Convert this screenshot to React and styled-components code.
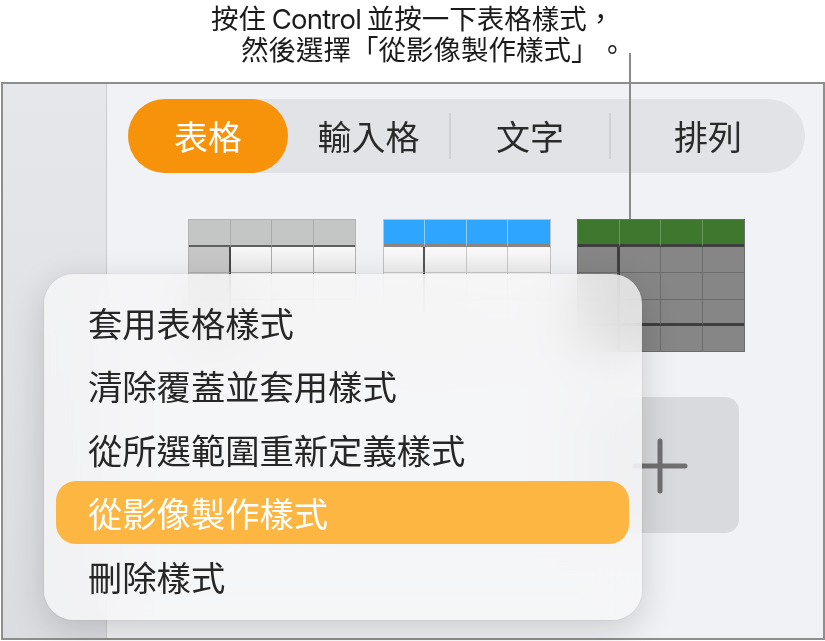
import React from "react";
import styled, { createGlobalStyle } from "styled-components";

const GlobalStyle = createGlobalStyle`
  html, body {
    margin: 0;
    padding: 0;
    background: #ffffff;
  }
  body {
    width: 825px;
    height: 641px;
    overflow: hidden;
    font-family: "Noto Sans CJK TC", sans-serif;
    text-spacing-trim: space-all;
  }
`;

const Page = styled.div`
  position: relative;
  width: 825px;
  height: 641px;
  display: flex;
  flex-direction: column;
`;

const Caption = styled.div`
  height: 82px;
  box-sizing: border-box;
  padding: 4px 0 0 211px;
  font-family: Inter, "Noto Sans CJK TC", sans-serif;
  font-size: 27.5px;
  line-height: 31px;
  color: #1b1b1b;
  text-spacing-trim: space-all;
`;

const CaptionLine = styled.div`
  padding-left: ${(p) => p.$indent || 0}px;
  white-space: nowrap;
  word-spacing: -2px;
`;

const LatinRun = styled.span`
  letter-spacing: -0.8px;
`;

const Leader = styled.div`
  position: absolute;
  left: 629px;
  top: 53px;
  width: 2px;
  height: 166px;
  background: #8a8a8a;
`;

const Window = styled.div`
  display: flex;
  margin-left: 1px;
  width: 824px;
  height: 558px;
  box-sizing: border-box;
  border: 2px solid #8e8e8e;
  overflow: hidden;
`;

const Sidebar = styled.div`
  width: 103px;
  flex: none;
  border-right: 1px solid #cbcccf;
  background: linear-gradient(180deg, #e6e7ea 0%, #dcdde1 100%);
`;

const Inspector = styled.div`
  flex: 1;
  background: #f1f2f5;
  padding: 15px 18px 0 21px;
  display: flex;
  flex-direction: column;
`;

const SegmentTrack = styled.div`
  display: flex;
  align-items: center;
  height: 74px;
  border-radius: 37px;
  background: #e2e3e7;
`;

const Segment = styled.div`
  flex: ${(p) => (p.$width ? `0 0 ${p.$width}px` : "1")};
  height: 100%;
  display: flex;
  align-items: center;
  justify-content: center;
  border-radius: 37px;
  font-size: 34px;
  line-height: 1;
  color: ${(p) => (p.$active ? "#ffffff" : "#2a2a2a")};
  background: ${(p) => (p.$active ? "#f7920b" : "transparent")};
`;

const SegmentDivider = styled.div`
  flex: none;
  width: 2px;
  height: 46px;
  background: #d0d1d5;
`;

const Gallery = styled.div`
  margin-top: 46px;
  display: grid;
  grid-template-columns: repeat(3, 168px);
  grid-auto-rows: 133px;
  column-gap: 26.5px;
  row-gap: 45px;
  justify-content: center;
`;

const Thumb = styled.div`
  width: 168px;
  height: 133px;
  box-sizing: border-box;
  display: grid;
  grid-template-columns: repeat(4, 1fr);
  grid-template-rows: 27px 26px 27px 26px 1fr;
  border: 1px solid ${(p) => p.$outer};
  overflow: hidden;
`;

const Cell = styled.div`
  background: ${(p) => p.$bg};
  border-right: ${(p) => p.$right};
  border-bottom: ${(p) => p.$bottom};
`;

const AddTile = styled.div`
  width: 162px;
  height: 136px;
  border-radius: 14px;
  background: #d9dadd;
  display: flex;
  align-items: center;
  justify-content: center;
`;

const Menu = styled.div`
  position: absolute;
  left: 44px;
  top: 274px;
  width: 598px;
  height: 346px;
  box-sizing: border-box;
  padding: 16px 13px 0 12px;
  border-radius: 30px;
  background: rgba(246, 246, 248, 0.8);
  backdrop-filter: blur(26px) saturate(1.1);
  box-shadow: 0 10px 36px rgba(0, 0, 0, 0.16), 0 0 0 1px rgba(0, 0, 0, 0.04);
`;

const MenuItem = styled.div`
  height: 63.5px;
  display: flex;
  align-items: center;
  padding-left: 32px;
  border-radius: 20px;
  font-size: 34.3px;
  line-height: 1;
  color: ${(p) => (p.$active ? "#ffffff" : "#262626")};
  background: ${(p) => (p.$active ? "#fcb641" : "transparent")};
`;

const styles = [
  {
    outer: "#b3b3b3",
    head: "#c4c5c5",
    headLine: "#a9aaaa",
    headRule: "2px solid #5f5f5f",
    body: "linear-gradient(180deg, #f8f8f8, #eaeaea)",
    firstCol: "#c7c7c7",
    line: "#acacac",
    colRule: "2px solid #474747",
    footRule: "1px solid #acacac",
  },
  {
    outer: "#c2c2c2",
    head: "#2ea6ff",
    headLine: "#8fd0ff",
    headRule: "3px solid #8c847e",
    body: "linear-gradient(180deg, #fafafa, #ededed)",
    firstCol: "linear-gradient(180deg, #fafafa, #ededed)",
    line: "#c8c8c8",
    colRule: "2px solid #555555",
    footRule: "1px solid #c8c8c8",
  },
  {
    outer: "#6d6d6d",
    head: "#3e782e",
    headLine: "#6a9a5c",
    headRule: "3px solid #3d3d3d",
    body: "#868686",
    firstCol: "#868686",
    line: "#6c6c6c",
    colRule: "3px solid #3f3f3f",
    footRule: "3px solid #3f3f3f",
  },
];

function TableThumb({ s }) {
  const cells = [];
  for (let r = 0; r < 5; r++) {
    for (let c = 0; c < 4; c++) {
      const lastCol = c === 3;
      let bg;
      let right;
      let bottom;
      if (r === 0) {
        bg = s.head;
        right = lastCol ? "none" : `1px solid ${s.headLine}`;
        bottom = s.headRule;
      } else {
        bg = c === 0 ? s.firstCol : s.body;
        right = lastCol ? "none" : c === 0 ? s.colRule : `1px solid ${s.line}`;
        bottom = r === 3 ? s.footRule : r === 4 ? "none" : `1px solid ${s.line}`;
      }
      cells.push(<Cell key={`${r}-${c}`} $bg={bg} $right={right} $bottom={bottom} />);
    }
  }
  return <Thumb $outer={s.outer}>{cells}</Thumb>;
}

function PlusIcon() {
  return (
    <svg width="56" height="56" viewBox="0 0 56 56" style={{ marginLeft: 3, marginTop: 2 }}>
      <path d="M28 3 V53 M3 28 H53" stroke="#707070" strokeWidth="5" strokeLinecap="round" fill="none" />
    </svg>
  );
}

const tabs = [
  { label: "表格", width: 160, active: true },
  { label: "輸入格", width: 161 },
  { divider: true },
  { label: "文字", width: 158 },
  { divider: true },
  { label: "排列" },
];

const menuItems = [
  "套用表格樣式",
  "清除覆蓋並套用樣式",
  "從所選範圍重新定義樣式",
  "從影像製作樣式",
  "刪除樣式",
];

export default function App() {
  return (
    <Page>
      <GlobalStyle />
      <Caption>
        <CaptionLine>
          按住 <LatinRun>Control</LatinRun> 並按一下表格樣式，
        </CaptionLine>
        <CaptionLine $indent={30}>然後選擇「從影像製作樣式」。</CaptionLine>
      </Caption>
      <Window>
        <Sidebar />
        <Inspector>
          <SegmentTrack>
            {tabs.map((t, i) =>
              t.divider ? (
                <SegmentDivider key={i} />
              ) : (
                <Segment key={i} $width={t.width} $active={t.active}>
                  {t.label}
                </Segment>
              )
            )}
          </SegmentTrack>
          <Gallery>
            {styles.map((s, i) => (
              <TableThumb key={i} s={s} />
            ))}
            <div />
            <div />
            <AddTile>
              <PlusIcon />
            </AddTile>
          </Gallery>
        </Inspector>
      </Window>
      <Leader />
      <Menu>
        {menuItems.map((m, i) => (
          <MenuItem key={i} $active={i === 3}>
            {m}
          </MenuItem>
        ))}
      </Menu>
    </Page>
  );
}
